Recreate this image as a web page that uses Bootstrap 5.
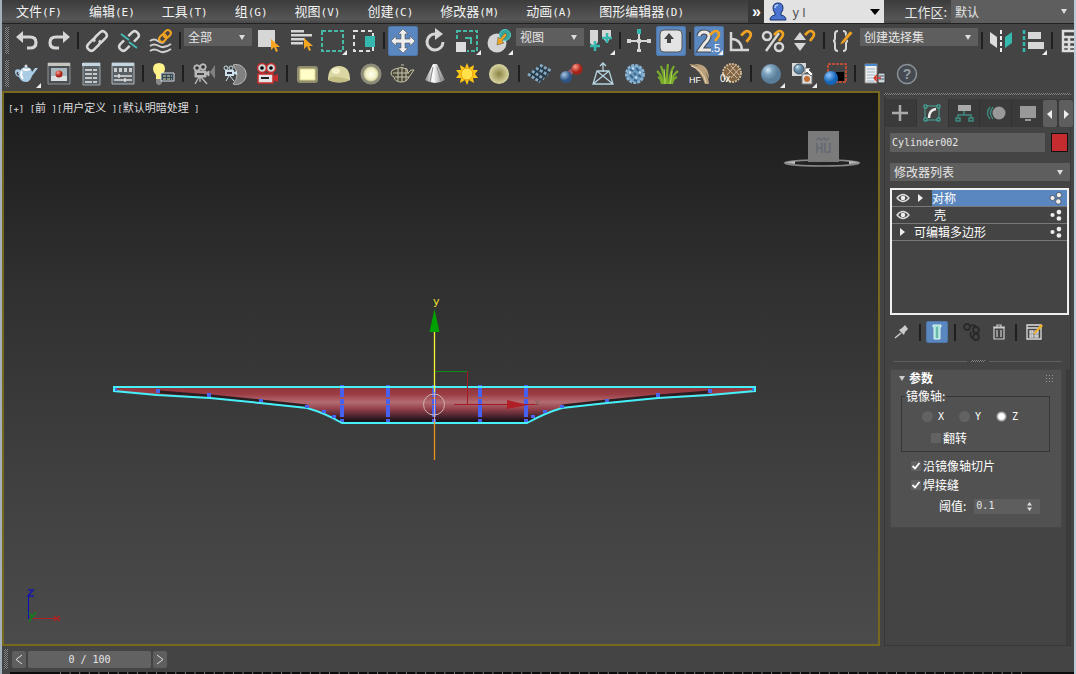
<!DOCTYPE html>
<html lang="zh-CN">
<head>
<meta charset="utf-8">
<meta name="viewport" content="width=device-width, initial-scale=1">
<title>3ds Max</title>
<link href="https://cdn.jsdelivr.net/npm/bootstrap@5.3.0/dist/css/bootstrap.min.css" rel="stylesheet">
<script src="https://cdn.jsdelivr.net/npm/bootstrap@5.3.0/dist/js/bootstrap.bundle.min.js"></script>
<style>
:root{--ui:#444;--field:#5e5e5e;--hot:#5b87c0;--ink:#e6e6e6}
body{background:var(--ui);color:var(--ink);font:12px/16px "Noto Sans CJK SC",sans-serif}
.lat{font-family:"DejaVu Sans Mono",monospace;font-size:10px}
.app{border-left:2px solid #a4b0ba;border-right:2px solid #b9cbd8}
.menubar{height:24px;background:linear-gradient(#3c3c3c,#565656 85%,#484848);border-bottom:1px solid #222;font-size:13px}
.menubar .menu-link{color:#f2f2f2;text-decoration:none;padding:0 13px 0 14px;white-space:nowrap;line-height:21px}
.menubar .lat{font-size:11px}
.more{background:#383838;color:#fff;border:0;width:16px;font:bold 16px/18px "Liberation Sans",sans-serif}
.userbox{width:120px;background:#e2e2e2}
.userbox select{color:#555;font:13px/20px "Liberation Sans",sans-serif}
.pick{appearance:none;border:0;border-radius:0;background:var(--field) url("data:image/svg+xml,%3Csvg xmlns='http://www.w3.org/2000/svg' width='8' height='5'%3E%3Cpath d='M1 0h6L4 5z' fill='%23ddd'/%3E%3C/svg%3E") no-repeat right 6px center;color:var(--ink);padding:0 16px 0 4px;height:18px;font-size:12px;line-height:16px}
.pick-dark{background:transparent url("data:image/svg+xml,%3Csvg xmlns='http://www.w3.org/2000/svg' width='10' height='6'%3E%3Cpath d='M0 0h10L5 6z' fill='%23000'/%3E%3C/svg%3E") no-repeat right 4px center}
.w-filter{width:68px}.w-sets{width:118px}.w-space{width:123px}
.toolrow{height:33px;padding-left:3px}
.grip{width:4px;height:27px;margin-right:2px;flex:none;background:repeating-conic-gradient(#858585 0 25%,#3a3a3a 0 50%) 0 0/2px 2px}
.tool{width:32px;height:30px;padding:0;border:0;background:none;flex:none;display:flex;align-items:center;justify-content:center}
.tool svg{width:28px;height:28px;flex:none}
.tool.on{background:var(--hot);width:30px;margin:0 1px;border-radius:3px;box-shadow:inset 0 0 0 1px #4d76aa}
.bar{width:2px;height:17px;background:#1f1f1f;margin:0 2px;flex:none}
.wide .bar{margin:0 3px}
.toolrow .pick{margin:4px 1px 0;align-self:flex-start;flex:none}
.stage{padding-top:1px}
.view{border:2px solid #776820;background:linear-gradient(#1b1b1b,#303030 35%,#404040 70%,#4b4b4b)}
.viewtag{top:6px;left:4px;font-size:11px;color:#dcdcdc;white-space:pre;z-index:1}
.viewtag a{color:inherit;text-decoration:none}
.viewtag .lat{font-size:9px}
.cube{top:36px;right:16px}
.tripod{left:20px;bottom:16px}
.panel{width:194px;padding:2px 3px 0 4px}
.panel-in{border:1px solid #383838;border-top:0;padding:0 0 0 5px}
.dots{height:2px;background:repeating-conic-gradient(#858585 0 25%,#3a3a3a 0 50%) 0 0/2px 2px}
.tabs{background:#3a3a3a;margin:4px -3px 0 -5px}
.tab{height:28px;flex:1 1 0;border:0;padding:0;background:none;border-right:1px solid #333}
.tab.on{background:var(--ui)}
.tab svg{width:24px;height:24px}
.arrow{width:14px;height:27px;border:0;padding:0;background:#5e5e5e;border-radius:2px;margin-right:2px;flex:none}
.arrow:last-child{margin-right:0}
.namerow{padding:6px 2px 0 0;gap:6px;margin-bottom:11px}
.namebox{background:var(--field);border:0;color:var(--ink);height:19px;padding:0 2px;min-width:0}
.swatch{width:17px;height:19px;border:1px solid #111;background:#c42c30;padding:0}
.stack{border:2px solid #f0f0f0;height:127px;margin:7px 1px 0 0}
.stack-row{height:17px;border-bottom:1px solid #787878;line-height:15px;color:#fff}
.stack-row svg{flex:none}
.stack-name{line-height:16px}
.stack-row.on .hl{background:var(--hot)}
.mini{margin-top:6px}
.mini .tool{width:24px;height:22px}
.mini .tool.on{width:22px}
.mini svg{width:20px;height:20px}
.divide{margin:17px 8px 7px 4px}
.divide .dots{width:14px}
.rule-line{height:1px;background:#606060}
.rollup{background:#515151;border:1px solid #484848;border-radius:2px;width:172px;height:159px;color:#fff;flex:none}
.track{width:5px;background:#3c3c3c}
.axisbox{border:1px solid #363636;width:149px;height:64px;margin:2px 0 0 10px}
.axisbox legend{font-size:12px;line-height:16px;width:auto;float:none;margin:0 0 3px 3px;padding:0 1px}
.opt{display:flex;align-items:center;gap:2px;min-height:0;margin:0;padding:0;line-height:19px}
.opt .form-check-input{float:none;margin:0;width:10px;height:10px;border:0;background-color:#626262;border-radius:1px;flex:none}
.opt .form-check-input:checked{background-color:#626262;background-image:url("data:image/svg+xml,%3Csvg xmlns='http://www.w3.org/2000/svg' viewBox='0 0 10 10'%3E%3Cpath d='M1.5 5l2.5 2.5L8.500 2' fill='none' stroke='%23fff' stroke-width='1.800'/%3E%3C/svg%3E")}
.opt .form-check-input[type=radio]{width:11px;height:11px;border-radius:50%}
.opt .form-check-input[type=radio]:checked{background-image:radial-gradient(#fff 35%,#bbb 50%,transparent 70%)}
.opt-axis{width:37px;gap:5px}
.flip{margin:2px 0 0 29px}
.spin{background:var(--field);width:66px;height:15px}
.spin input{background:none;border:0;color:var(--ink);width:52px;height:15px;padding:0 2px}
.foot{height:28px}
.timerow{padding:3px 0 0 2px;gap:2px}
.timerow .grip{height:20px}
.step{width:14px;height:17px;border:0;padding:0;background:var(--field);border-radius:2px;display:flex;align-items:center;justify-content:center}
.slider{width:123px;height:17px;background:#626262;border-radius:2px;line-height:17px;text-align:center;white-space:pre}
.ticks{height:2px;background:#0c0c0c}
.ticks div{height:2px;margin:0 52px 0 50px;background:linear-gradient(90deg,#777 1px,transparent 1px) 0 0/1% 100%}
</style>
</head>
<body>
<svg width="0" height="0" class="position-absolute" aria-hidden="true"><defs>
<symbol id="fly" viewBox="0 0 28 28"><path d="M28 28h-5l5-5z" fill="#eee"/></symbol>
<symbol id="magnet" viewBox="0 0 14 14"><path d="M2 6L5 3Q8 1 10 3T10 8L7 12" fill="none" stroke="#f0a322" stroke-width="2.600"/></symbol>
<symbol id="cursor" viewBox="0 0 10 14"><path d="M1 0v11l3-3 2 5 2-1-2-4h4z" fill="#f6a623"/></symbol>
<symbol id="eye" viewBox="0 0 14 10"><path d="M1 5Q7-2 13 5Q7 12 1 5z" fill="none" stroke="#ddd" stroke-width="1.300"/><circle cx="7" cy="5" r="2.300" fill="#eee"/></symbol>
<symbol id="tri" viewBox="0 0 6 8"><path d="M0 0l5 4-5 4z" fill="#eee"/></symbol>
<symbol id="nodes" viewBox="0 0 12 12"><circle cx="3" cy="6" r="1.800"/><circle cx="8.500" cy="3.500" r="2"/><circle cx="8.500" cy="9" r="2"/></symbol>
<symbol id="nodesOn" viewBox="0 0 12 12"><circle cx="3" cy="6" r="2.200"/><circle cx="8.500" cy="3.500" r="2.300"/><circle cx="8" cy="9" r="2.300"/></symbol>
<symbol id="camera" viewBox="0 0 28 28"><circle cx="8" cy="8" r="3.200"/><circle cx="14" cy="7" r="3.200"/><path d="M6 11h11v6H6zM17 13l3-2v5l-3-2z"/><path d="M10 17l-4 7M12 17l6 7M11 17v5" stroke-width="1.400" fill="none"/></symbol>
<radialGradient id="gBlue" cx=".35" cy=".3"><stop offset="0" stop-color="#d9ecf8"/><stop offset=".45" stop-color="#7fa4be"/><stop offset="1" stop-color="#5b7f9a"/></radialGradient>
<radialGradient id="gDeep" cx=".35" cy=".3"><stop offset="0" stop-color="#8cc4ff"/><stop offset="1" stop-color="#1464b8"/></radialGradient>
<radialGradient id="gSteel" cx=".35" cy=".3"><stop offset="0" stop-color="#a5c4e4"/><stop offset="1" stop-color="#2c5484"/></radialGradient>
<radialGradient id="gRed" cx=".35" cy=".3"><stop offset="0" stop-color="#ff9a88"/><stop offset="1" stop-color="#a82218"/></radialGradient>
<radialGradient id="gYel"><stop offset="0" stop-color="#fffff0"/><stop offset=".7" stop-color="#f2efc4"/><stop offset="1" stop-color="#c6c391"/></radialGradient>
<radialGradient id="gOlive"><stop offset="0" stop-color="#8b8344"/><stop offset="1" stop-color="#dcd8a4"/></radialGradient>
<linearGradient id="gCone"><stop offset="0" stop-color="#888"/><stop offset=".4" stop-color="#fff"/><stop offset="1" stop-color="#777"/></linearGradient>
<linearGradient id="gBody" gradientUnits="userSpaceOnUse" x1="0" y1="387" x2="0" y2="423"><stop offset="0" stop-color="#8d3239"/><stop offset=".2" stop-color="#9c3d44"/><stop offset=".42" stop-color="#b36d73"/><stop offset=".6" stop-color="#96424c"/><stop offset=".82" stop-color="#47222e"/><stop offset=".93" stop-color="#1c1418"/></linearGradient>
</defs></svg>

<div class="app d-flex flex-column min-vh-100">
<header class="menubar d-flex align-items-stretch">
  <nav class="d-flex flex-grow-1 overflow-hidden" aria-label="主菜单">
    <a href="#" class="menu-link">文件<span class="lat">(F)</span></a><a href="#" class="menu-link">编辑<span class="lat">(E)</span></a><a href="#" class="menu-link">工具<span class="lat">(T)</span></a><a href="#" class="menu-link">组<span class="lat">(G)</span></a><a href="#" class="menu-link">视图<span class="lat">(V)</span></a><a href="#" class="menu-link">创建<span class="lat">(C)</span></a><a href="#" class="menu-link">修改器<span class="lat">(M)</span></a><a href="#" class="menu-link">动画<span class="lat">(A)</span></a><a href="#" class="menu-link">图形编辑器<span class="lat">(D)</span></a>
  </nav>
  <button class="more p-0">»</button>
  <div class="userbox d-flex align-items-center ps-1">
    <svg width="20" height="20" viewBox="0 0 20 20"><path d="M2 18q0-4 5-5v-2q-2-2-2-5 0-5 5-5t5 5q0 3-2 5v2q5 1 5 5z" fill="#4b74d0" stroke="#16306e"/><path d="M7 6q0-3 3-3" stroke="#a9c6ff" stroke-width="1.500" fill="none"/></svg>
    <select class="pick pick-dark flex-grow-1" aria-label="用户"><option>y l</option></select>
  </div>
  <label for="ws" class="ps-3 ms-1 pe-1 align-self-center">工作区:</label>
  <select id="ws" class="pick align-self-center h-100 w-space"><option>默认</option></select>
</header>

<div class="toolrow d-flex align-items-center overflow-hidden" role="toolbar" aria-label="主工具栏">
  <div class="grip"></div>
  <button class="tool" aria-label="撤消"><svg viewBox="0 0 28 28"><path d="M3 10l7-6v12z" fill="#d6d6d6"/><path d="M9 10h8q6 0 6 5.500T17 21h-3" fill="none" stroke="#d6d6d6" stroke-width="3.200"/></svg></button>
  <button class="tool" aria-label="重做"><svg viewBox="0 0 28 28"><path d="M25 10l-7-6v12z" fill="#d6d6d6"/><path d="M19 10h-8q-6 0-6 5.500T11 21h3" fill="none" stroke="#d6d6d6" stroke-width="3.200"/></svg></button>
  <span class="bar"></span>
  <button class="tool" aria-label="链接"><svg viewBox="0 0 28 28"><g transform="rotate(-45 14 14)" fill="none" stroke="#d8d8d8" stroke-width="2.500"><path d="M13 10H6q-4 0-4 4t4 4h6q4 0 4-3"/><path d="M15 18h7q4 0 4-4t-4-4h-6q-4 0-4 3"/></g></svg></button>
  <button class="tool" aria-label="取消链接"><svg viewBox="0 0 28 28"><g transform="rotate(-45 14 14)" fill="none" stroke="#d8d8d8" stroke-width="2.500"><path d="M11 10H6q-4 0-4 4t4 4h5M17 18h5q4 0 4-4t-4-4h-5"/></g><path d="M6 7l8 6M14 15l8 6" stroke="#45b8b0" stroke-width="2"/></svg></button>
  <button class="tool" aria-label="绑定到空间扭曲"><svg viewBox="0 0 28 28"><g fill="none" stroke="#d0d0d0" stroke-width="2"><path d="M3 14q4-3 8 0t6 1M3 19q4-3 9 0t12-2M3 24q4-3 9 0t12-2"/></g><g transform="rotate(-45 18 9)" fill="none" stroke="#f0a322" stroke-width="2"><rect x="11" y="6" width="8" height="6" rx="3"/><rect x="17" y="6" width="8" height="6" rx="3"/></g></svg></button>
  <span class="bar"></span>
  <select class="pick w-filter" aria-label="选择过滤器"><option>全部</option></select>
  <button class="tool" aria-label="选择对象"><svg viewBox="0 0 28 28"><path d="M3 3h17v17H3z" fill="#d6d6d6"/><use href="#cursor" x="15" y="12" width="10" height="14"/></svg></button>
  <button class="tool" aria-label="按名称选择"><svg viewBox="0 0 28 28"><path d="M4 3h13v2.500H4zM4 7h21v2.500H4zM4 11h14v2.500H4zM4 15h12v2.500H4z" fill="#d6d6d6"/><use href="#cursor" x="16" y="11" width="10" height="14"/></svg></button>
  <button class="tool" aria-label="矩形选择区域"><svg viewBox="0 0 28 28"><path d="M3 4h21v20H3z" fill="none" stroke="#45b8a6" stroke-width="2" stroke-dasharray="4 2"/><use href="#fly"/></svg></button>
  <button class="tool" aria-label="窗口/交叉"><svg viewBox="0 0 28 28"><path d="M3 4h19v20H3z" fill="none" stroke="#e0e0e0" stroke-width="2" stroke-dasharray="4 3"/><path d="M14 9h10v11H14z" fill="#35b8ae"/></svg></button>
  <span class="bar"></span>
  <button class="tool on" aria-label="移动"><svg viewBox="0 0 28 28"><path d="M14 2l5 5h-3v5h5V9l5 5-5 5v-3h-5v5h3l-5 5-5-5h3v-5H7v3l-5-5 5-5v3h5V7H9z" fill="#eee" stroke="#555" stroke-width=".6"/></svg></button>
  <button class="tool" aria-label="旋转"><svg viewBox="0 0 28 28"><path d="M15 7a8 8 0 1 0 7 8" fill="none" stroke="#d6d6d6" stroke-width="3"/><path d="M14 1l8 6-8 6z" fill="#d6d6d6"/></svg></button>
  <button class="tool" aria-label="缩放"><svg viewBox="0 0 28 28"><path d="M4 4h20v20H4z" fill="none" stroke="#45b8a6" stroke-width="2" stroke-dasharray="4 2"/><path d="M2 14h12v12H2z" fill="#444"/><path d="M3 15h10v10H3z" fill="#ddd"/><path d="M12 11h6v6" fill="none" stroke="#45b8a6" stroke-width="2"/><use href="#fly"/></svg></button>
  <button class="tool" aria-label="放置"><svg viewBox="0 0 28 28"><circle cx="12" cy="16" r="9.500" fill="#d4d4d4"/><circle cx="20" cy="8" r="5.500" fill="#35a39a" stroke="#55cfc6"/><path d="M20 6l-5 6-2-2-1 8 7-2-2-2 5-6z" fill="#f0a322" stroke="#555" stroke-width=".5"/><use href="#fly"/></svg></button>
  <select class="pick w-filter" aria-label="参考坐标系"><option>视图</option></select>
  <button class="tool" aria-label="使用轴点中心"><svg viewBox="0 0 28 28"><path d="M3 3h8v12l-4 5-4-4zM15 3h9v7l-4 6-5-6z" fill="#d6d6d6"/><path d="M8 14v10M3 19h10M20 6v10M15 11h10" stroke="#35b8ae" stroke-width="2.500"/><use href="#fly"/></svg></button>
  <span class="bar"></span>
  <button class="tool" aria-label="选择并操纵"><svg viewBox="0 0 28 28"><path d="M14 7v17M4 14h20" stroke="#d6d6d6" stroke-width="2"/><path d="M12 2h4v5h-4z" fill="#35b8ae"/><path d="M2 12h4v4H2zM22 12h4v4h-4zM12 12h4v4h-4zM12 22h4v3h-4z" fill="#d6d6d6"/></svg></button>
  <button class="tool on" aria-label="键盘快捷键覆盖"><svg viewBox="0 0 28 28"><rect x="3" y="3" width="22" height="22" rx="4" fill="#e4e4e4" stroke="#555"/><path d="M12 6l5 6h-3v4h-4v-4H7z" fill="#444"/></svg></button>
  <span class="bar"></span>
  <button class="tool on" aria-label="捕捉开关"><svg viewBox="0 0 28 28"><path d="M4 9q1-4 5-4 5 0 5 4 0 3-4 7l-5 7h11" fill="none" stroke="#444" stroke-width="5"/><path d="M4 9q1-4 5-4 5 0 5 4 0 3-4 7l-5 7h11" fill="none" stroke="#e8e8e8" stroke-width="3"/><use href="#magnet" x="13" y="2" width="14" height="14"/><text x="16" y="25" font-family="Liberation Sans" font-size="11" fill="#fff">.5</text><use href="#fly"/></svg></button>
  <button class="tool" aria-label="角度捕捉"><svg viewBox="0 0 28 28"><path d="M4 5v18h18M4 12q10 0 11 11" fill="none" stroke="#d6d6d6" stroke-width="2.500"/><use href="#magnet" x="12" y="2" width="15" height="15"/></svg></button>
  <button class="tool" aria-label="百分比捕捉"><svg viewBox="0 0 28 28"><g fill="none" stroke="#d6d6d6" stroke-width="2.500"><circle cx="8" cy="9" r="4"/><circle cx="20" cy="20" r="4"/><path d="M20 6L7 24"/></g><use href="#magnet" x="13" y="2" width="14" height="14"/></svg></button>
  <button class="tool" aria-label="微调器捕捉"><svg viewBox="0 0 28 28"><path d="M3 13l6-8 6 8zM3 16h12l-6 8z" fill="#d6d6d6"/><use href="#magnet" x="12" y="2" width="14" height="14"/></svg></button>
  <span class="bar"></span>
  <button class="tool" aria-label="编辑命名选择集"><svg viewBox="0 0 28 28"><path d="M9 4q-3 0-3 3v4q0 3-2 3 2 0 2 3v4q0 3 3 3M14 4q3 0 3 3v4q0 3 2 3-2 0-2 3v4q0 3-3 3" fill="none" stroke="#d6d6d6" stroke-width="2"/><path d="M12 15l9-11 3 2-9 10-4 2z" fill="#f0a322" stroke="#444" stroke-width=".6"/></svg></button>
  <select class="pick w-sets" aria-label="命名选择集"><option>创建选择集</option></select>
  <span class="bar"></span>
  <button class="tool" aria-label="镜像"><svg viewBox="0 0 28 28"><path d="M3 5l7 5v11l-7-5z" fill="#ddd"/><path d="M25 5l-7 5v11l7-5z" fill="#35b8ae"/><path d="M14 3v22" stroke="#eee" stroke-width="2" stroke-dasharray="4 2"/></svg></button>
  <button class="tool" aria-label="对齐"><svg viewBox="0 0 28 28"><path d="M5 3v22" stroke="#35b8ae" stroke-width="2.500" stroke-dasharray="4 2"/><path d="M9 5h13v7H9zM9 15h16v7H9z" fill="#d6d6d6"/><use href="#fly"/></svg></button>
  <span class="bar"></span>
  <button class="tool justify-content-start ps-1" aria-label="层资源管理器"><svg viewBox="0 0 28 28"><path d="M4 4h20v20H4zM4 10h20M4 15h20M4 20h20M10 10v14M17 10v14" fill="none" stroke="#ddd" stroke-width="2.500"/></svg></button>
</div>

<div class="toolrow wide d-flex align-items-center overflow-hidden" role="toolbar" aria-label="渲染工具栏">
  <div class="grip"></div>
  <button class="tool" aria-label="渲染"><svg viewBox="0 0 28 28"><path d="M8 9q5-4 10 0l1 3 3-4h3l-6 8q-2 6-6 6-5 0-7-5-4-1-4-5t6-2z" fill="#aacbe4"/><path d="M9 11q-2 4 1 8M10 9q3 2 7 0" stroke="#fff" fill="none" stroke-width="2"/><path d="M5 12q-2 2 1 3" stroke="#444" fill="none" stroke-width="1.500"/><circle cx="13" cy="6" r="1.500" fill="#ddd"/><use href="#fly"/></svg></button>
  <button class="tool" aria-label="渲染帧窗口"><svg viewBox="0 0 28 28"><path d="M3 3h22v21H3z" fill="#4a5055" stroke="#909090"/><path d="M3 3h22v3H3z" fill="#c4c4bc"/><path d="M6 8h16v13H6z" fill="#aab8be"/><path d="M6 16h16v5H6z" fill="#dadfe0"/><circle cx="14" cy="14" r="3.500" fill="url(#gRed)"/></svg></button>
  <button class="tool" aria-label="渲染设置"><svg viewBox="0 0 28 28"><path d="M6 3h17v22H6z" fill="#596066" stroke="#9ba4aa"/><path d="M5 3h18v3H5z" fill="#c4d5e0"/><path d="M8 10h12M8 14h12M8 18h12M8 22h12" stroke="#c5c8c8" stroke-width="2" stroke-dasharray="7 1 4 1"/></svg></button>
  <button class="tool" aria-label="材质列表"><svg viewBox="0 0 28 28"><path d="M3 3h22v21H3z" fill="#596066" stroke="#b0b8bc"/><path d="M3 3h22v3H3z" fill="#c4d5e0"/><path d="M5 10h18" stroke="#ccc" stroke-width="4" stroke-dasharray="3 2"/><path d="M5 16h18M5 20h18M10 14v4M16 18v4" stroke="#ddd" stroke-width="1.500"/></svg></button>
  <span class="bar"></span>
  <button class="tool" aria-label="灯光列表"><svg viewBox="0 0 28 28"><path d="M10 3q6 0 6 6 0 3-3 6v4H7v-4q-3-3-3-6 0-6 6-6z" fill="#fff38a"/><path d="M7 19h6v4l-2 2H9l-2-2z" fill="#888"/><path d="M12 13h13v8H12z" fill="#30445a" stroke="#ddd"/><path d="M14 16h9M14 19h9" stroke="#ece7a0" stroke-dasharray="3 1"/></svg></button>
  <span class="bar"></span>
  <button class="tool" aria-label="目标摄影机"><svg viewBox="0 0 28 28"><use href="#camera" fill="#b9b9b9" stroke="#b9b9b9"/><circle cx="8" cy="8" r="1.800" fill="#333"/><circle cx="14" cy="7" r="1.800" fill="#333"/><path d="M8 14h7" stroke="#444" stroke-width="2"/><path d="M26 5v14l-5-7z" fill="#808080"/></svg></button>
  <button class="tool" aria-label="VR 摄影机"><svg viewBox="0 0 28 28"><path d="M12 5a10 10 0 1 1 0 19q8-9 0-19z" fill="#808080" stroke="#b8b8b8"/><path d="M4 10h9v6H4zM13 12l3-1v4l-3-1z" fill="#cde2ea"/><circle cx="5" cy="8" r="2" fill="none" stroke="#cde2ea"/><circle cx="10" cy="8" r="2" fill="none" stroke="#cde2ea"/><path d="M8 16l-3 5M9 16l4 5" stroke="#cde2ea"/><path d="M6 13h5" stroke="#334" stroke-width="2"/></svg></button>
  <button class="tool" aria-label="物理摄影机"><svg viewBox="0 0 28 28"><circle cx="9" cy="8" r="4.500" fill="#ccd5d5" stroke="#c92c2c" stroke-width="1.500"/><circle cx="18" cy="8" r="4.500" fill="#ccd5d5" stroke="#c92c2c" stroke-width="1.500"/><path d="M5 14h15v9H5z" fill="#e3e3e3" stroke="#c92c2c" stroke-width="1.500"/><path d="M20 16l5-2v8l-5-2z" fill="#c92c2c"/><circle cx="9" cy="8" r="1.800"/><circle cx="18" cy="8" r="1.800"/><path d="M8 18h8" stroke="#222" stroke-width="2"/></svg></button>
  <span class="bar"></span>
  <button class="tool" aria-label="平面灯"><svg viewBox="0 0 28 28"><rect x="4" y="6" width="21" height="17" rx="3" fill="#918e70"/><path d="M7 9h15v11H7z" fill="#fffdc8" stroke="#ded88e"/></svg></button>
  <button class="tool" aria-label="穹顶灯"><svg viewBox="0 0 28 28"><path d="M3 20Q3 6 14 6t11 14q-11 5-22 0z" fill="#dbd7a2"/><path d="M3 20Q5 15 14 17t11 3q-11 5-22 0z" fill="#c2be84"/><ellipse cx="11" cy="11" rx="4" ry="3" fill="#f4f1ca"/></svg></button>
  <button class="tool" aria-label="球形灯"><svg viewBox="0 0 28 28"><circle cx="14" cy="14" r="10.500" fill="#8d8b7a"/><circle cx="14" cy="14" r="7.500" fill="url(#gYel)"/></svg></button>
  <button class="tool" aria-label="网格灯"><svg viewBox="0 0 28 28"><path d="M6 9q6-3 12 0l1 4 3-3h3l-5 7q-2 5-8 5t-7-5q-3-1-3-4t4-4z" fill="#4a493c" stroke="#c9c5aa"/><path d="M4 13h16M6 17h14M9 8v13M13 7v15M17 8v13M12 5h3" stroke="#c9c5aa"/></svg></button>
  <button class="tool" aria-label="IES 灯"><svg viewBox="0 0 28 28"><path d="M12 4h4l8 16q-10 6-20 0z" fill="url(#gCone)"/><path d="M12 7l-3 15M16 7l4 14" stroke="#888"/></svg></button>
  <button class="tool" aria-label="太阳"><svg viewBox="0 0 28 28"><path d="M14 3l2 5 5-3-1 5 5 0-3 4 3 4h-5l1 5-5-3-2 5-2-5-5 3 1-5H3l3-4-3-4h5L7 5l5 3z" fill="#ffc814"/><circle cx="14" cy="14" r="6" fill="#ffe14a" stroke="#e59a10"/></svg></button>
  <button class="tool" aria-label="环境灯"><svg viewBox="0 0 28 28"><circle cx="14" cy="14" r="10" fill="url(#gOlive)"/></svg></button>
  <span class="bar"></span>
  <button class="tool" aria-label="实例"><svg viewBox="0 0 28 28"><path d="M3 14l12-9 11 6-12 12z" fill="#263a49"/><g fill="none" stroke="#86a9bf" stroke-width="2.800" stroke-dasharray="3 1.500"><path d="M3 14l12 8M7 11l12 8M11 8l12 7M15 5l11 6"/></g></svg></button>
  <button class="tool" aria-label="变形球"><svg viewBox="0 0 28 28"><path d="M10 15l9-7" stroke="#9a5a6c" stroke-width="5"/><circle cx="9" cy="17" r="6" fill="url(#gSteel)"/><circle cx="20" cy="9" r="5.500" fill="url(#gRed)"/></svg></button>
  <button class="tool" aria-label="代理"><svg viewBox="0 0 28 28"><path d="M8 11h12l4 13H4zM8 11l16 13M20 11L4 24M14 12V3M11 6l3-3 3 3" fill="none" stroke="#b5d3de" stroke-width="1.300"/></svg></button>
  <button class="tool" aria-label="置换"><svg viewBox="0 0 28 28"><circle cx="14" cy="14" r="8.500" fill="#6f9bc0" stroke="#87b3d3" stroke-width="3" stroke-dasharray="3 1"/><path d="M9 9l3 2M15 8l3 3M9 15l3 3M17 15l3 2M13 13l2 2M13 20l3 1" stroke="#38658b" stroke-width="2"/><path d="M11 8l2 1M8 12l2 1M14 17l2 1M18 12l2 1" stroke="#c5dff2" stroke-width="2"/></svg></button>
  <button class="tool" aria-label="毛发"><svg viewBox="0 0 28 28"><path d="M11 24Q8 14 4 11M13 24Q10 12 8 6M14 24Q14 10 15 4M16 24Q17 12 21 6M18 24Q19 15 25 11M9 24Q8 18 5 17M19 24q1-6 5-7" fill="none" stroke="#79ac2b" stroke-width="2.200"/><path d="M12 24Q12 14 11 9M17 24Q19 16 19 11" stroke="#b5dc60" fill="none"/></svg></button>
  <button class="tool" aria-label="头发农场"><svg viewBox="0 0 28 28"><path d="M4 4q18 1 20 20h-4Q16 11 4 4zM9 4q15-1 15 15-4-11-15-15z" fill="#bba17c"/><path d="M6 6q12 3 15 17" stroke="#ead7b7" fill="none"/><text x="4" y="23" font-family="Liberation Sans" font-size="9" fill="#fff">HF</text></svg></button>
  <button class="tool" aria-label="Ox 毛发"><svg viewBox="0 0 28 28"><circle cx="15" cy="13" r="9" fill="#826447" stroke="#cdb794" stroke-width="2" stroke-dasharray="2 1"/><path d="M10 8l10 10M14 6l8 9M18 6l-8 9M22 9l-8 9" stroke="#d4bf9c"/><text x="3" y="22" font-family="Liberation Sans" font-size="10" fill="#fff">0x</text></svg></button>
  <span class="bar"></span>
  <button class="tool" aria-label="材质编辑器"><svg viewBox="0 0 28 28"><circle cx="14" cy="14" r="10" fill="url(#gBlue)"/><use href="#fly"/></svg></button>
  <button class="tool" aria-label="材质转换"><svg viewBox="0 0 28 28"><path d="M3 3h14v13H3z" fill="#d8d8d8"/><circle cx="10" cy="9" r="5" fill="url(#gBlue)" stroke="#456"/><path d="M13 14h10v10H13z" fill="#e0e0e0" stroke="#777"/><circle cx="18" cy="19" r="3" fill="#c46f35"/><path d="M16 8h6l-2 2 4 4-2 2-4-4-2 2z" fill="#fff" stroke="#333" stroke-width=".6"/><use href="#fly"/></svg></button>
  <button class="tool" aria-label="渲染区域"><svg viewBox="0 0 28 28"><path d="M7 4h18v18H7z" fill="none" stroke="#e05035" stroke-width="1.500" stroke-dasharray="3 1"/><path d="M15 12h8v9h-8z" fill="#000"/><circle cx="10" cy="18" r="7" fill="url(#gDeep)"/></svg></button>
  <span class="bar"></span>
  <button class="tool" aria-label="场景转换"><svg viewBox="0 0 28 28"><path d="M4 4h12v19H4z" fill="#eee" stroke="#888"/><path d="M4 4h12v2H4z" fill="#4888ce"/><path d="M6 9h8M6 12h8M6 15h8M6 18h8M6 21h8" stroke="#9bb3c5"/><path d="M17 13h7v10h-7z" fill="#ccd5da" stroke="#333"/><path d="M18 16h5M18 19h5" stroke="#456"/><path d="M20 18h-7m0 0l3-3m-3 3l3 3" stroke="#d43526" stroke-width="1.500"/></svg></button>
  <button class="tool" aria-label="帮助"><svg viewBox="0 0 28 28"><circle cx="14" cy="14" r="9.500" fill="#454a50" stroke="#8b9299" stroke-width="1.500"/><text x="14" y="19" text-anchor="middle" font-family="Liberation Sans" font-size="14" font-weight="bold" fill="#969da4">?</text></svg></button>
</div>

<main class="stage d-flex flex-grow-1">
  <section class="view position-relative flex-grow-1" aria-label="前视图">
    <div class="viewtag position-absolute"><a href="#"><span class="lat">[+] </span></a><a href="#"><span class="lat">[</span>前<span class="lat"> ]</span></a><a href="#"><span class="lat">[</span>用户定义<span class="lat"> ]</span></a><a href="#"><span class="lat">[</span>默认明暗处理<span class="lat"> ]</span></a></div>
    <svg class="position-absolute top-0 start-0 w-100 h-100" viewBox="4 93 874 551" preserveAspectRatio="xMidYMid meet">
      <path d="M114 387H755V391L710 395 658 398 607 403 562 408 527 423H342L307 408 260 403 210 398 157 395 114 391z" fill="url(#gBody)"/>
      <path d="M160 392l51 4 50 5 46 5M709 392l-51 4-51 5-45 5" stroke="#2a1e21" stroke-width="3" fill="none"/>
      <path d="M342 385v38M388 385v38M434 385v38M480 385v38M526 385v38" stroke="#4760f0" stroke-width="4" stroke-dasharray="12 2 5 1"/>
      <path d="M114 387H755V391L710 395 658 398 607 403 562 408Q545 413 527 423H342Q325 413 307 408L260 403 210 398 157 395 114 391z" fill="none" stroke="#45f0f8" stroke-width="2"/>
      <g fill="#4764ee"><path d="M156 389h4v4h-4zM207 393h4v4h-4zM259 399h4v3h-4zM305 405h4v3h-4zM322 410h4v3h-4zM332 415h4v3h-4zM531 415h4v3h-4zM543 410h4v3h-4zM560 405h4v3h-4zM605 399h4v3h-4zM656 393h4v4h-4zM708 389h4v4h-4zM752 388h2v3h-2zM115 388h2v3h-2z"/></g>
      <path d="M434 371.500h33" stroke="#0a8c10"/><path d="M467.500 371v33M454 404.500h84" stroke="#a31c24"/><path d="M507 400l21 5-21 4z" fill="#b01f26"/>
      <path d="M434.500 330v62" stroke="#f5f530" stroke-width="1.300"/><path d="M434.500 392v30" stroke="#d8a8a4"/><path d="M434.500 422v38" stroke="#e8941c" stroke-width="1.300"/>
      <path d="M434.500 309l5 23h-10z" fill="#00a000"/>
      <circle cx="434" cy="404.500" r="10.500" fill="none" stroke="#cfb4b4"/>
      <text x="433" y="305" font-family="DejaVu Sans" font-size="11" fill="#e8e030">y</text>
      <text x="534" y="406" font-family="DejaVu Sans" font-size="11" fill="#8d6064">x</text>
    </svg>
    <svg class="cube position-absolute" width="80" height="40" viewBox="0 0 80 40"><ellipse cx="40" cy="34" rx="37" ry="3" fill="none" stroke="#8a8a8a" stroke-width="1.500"/><path d="M1 34l12-2v3zM79 34l-12-2v3z" fill="#bbb"/><path d="M26 2h31v31H26z" fill="#7b7b7b"/><path d="M35 14v10M40 14v10M35 19h5M43 14v9h5v-9M34 11l3-2 2 2 3-2 2 2 3-2" fill="none" stroke="#636a74" stroke-width="1.500"/></svg>
    <svg class="tripod position-absolute" width="40" height="44" viewBox="0 0 40 44"><path d="M4.500 10v25" stroke="#1010b8"/><path d="M9 34.500h24" stroke="#b52020"/><path d="M5 29l3 4 4-5M8 33l-3 5" fill="none" stroke="#0a8a10" stroke-width="1.300"/><path d="M4 6h5l-5 6h6" fill="none" stroke="#1818a8" stroke-width="1.500"/><path d="M30 32l6 5M36 32l-6 5" stroke="#b52020" stroke-width="1.500"/></svg>
  </section>

  <aside class="panel d-flex flex-column flex-shrink-0">
    <div class="dots"></div>
    <div class="panel-in flex-grow-1 d-flex flex-column">
      <div class="tabs d-flex align-items-center" role="tablist">
        <button class="tab" role="tab" aria-label="创建"><svg viewBox="0 0 24 24"><path d="M12 4v16M4 12h16" stroke="#aaa" stroke-width="2.500"/></svg></button>
        <button class="tab on" role="tab" aria-label="修改"><svg viewBox="0 0 24 24"><path d="M5 5h14v14H5z" fill="none" stroke="#45a899"/><path d="M9 17Q9 9 16 8" fill="none" stroke="#eee" stroke-width="2.500"/><path d="M4 4h3v3H4zM17 4h3v3h-3zM4 17h3v3H4zM17 17h3v3h-3z" fill="#444" stroke="#45b8a6"/></svg></button>
        <button class="tab" role="tab" aria-label="层次"><svg viewBox="0 0 24 24"><path d="M6 4h13v6H6z" fill="#aaa"/><path d="M12 10v4M6 17v-3h13v3" stroke="#3d8c80" fill="none" stroke-width="1.500"/><path d="M4 17h4v3H4zM17 17h4v3h-4z" fill="none" stroke="#3d8c80" stroke-width="1.500"/></svg></button>
        <button class="tab" role="tab" aria-label="运动"><svg viewBox="0 0 24 24"><circle cx="15" cy="12" r="6.500" fill="#999"/><path d="M9 6q-5 6 0 12M6 6q-5 6 0 12" fill="none" stroke="#3d8c80" stroke-width="1.300"/></svg></button>
        <button class="tab border-0" role="tab" aria-label="显示"><svg viewBox="0 0 24 24"><path d="M4 5h16v12H4zM9 18h6v2H9z" fill="#999"/></svg></button>
        <button class="arrow" aria-label="向左"><svg width="6" height="9" viewBox="0 0 6 9"><path d="M5 0v9L0 4z" fill="#eee"/></svg></button>
        <button class="arrow" aria-label="向右"><svg width="6" height="9" viewBox="0 0 6 9"><path d="M1 0v9l5-5z" fill="#eee"/></svg></button>
      </div>
      <div class="namerow d-flex"><input class="namebox lat flex-grow-1" value="Cylinder002" aria-label="对象名称"><button class="swatch" aria-label="对象颜色"></button></div>
      <select class="pick" aria-label="修改器列表"><option>修改器列表</option></select>
      <div class="stack">
        <div class="stack-row on d-flex align-items-center"><svg class="ms-1" width="14" height="10"><use href="#eye"/></svg><svg class="ms-2" width="6" height="8"><use href="#tri"/></svg><span class="hl d-flex align-items-center flex-grow-1 h-100 ms-2"><span class="flex-grow-1 stack-name">对称</span><svg class="me-1" width="14" height="14" fill="#eee" stroke="#222" stroke-width=".5"><use href="#nodesOn"/></svg></span></div>
        <div class="stack-row d-flex align-items-center"><svg class="ms-1" width="14" height="10"><use href="#eye"/></svg><span class="ms-4 flex-grow-1 stack-name">壳</span><svg class="me-1" width="14" height="14" fill="#eee"><use href="#nodes"/></svg></div>
        <div class="stack-row d-flex align-items-center"><svg class="ms-2" width="6" height="8"><use href="#tri"/></svg><span class="ms-2 flex-grow-1 stack-name">可编辑多边形</span><svg class="me-1" width="14" height="14" fill="#eee"><use href="#nodes"/></svg></div>
      </div>
      <div class="mini d-flex align-items-center justify-content-between pe-4">
        <button class="tool" aria-label="锁定堆栈"><svg viewBox="0 0 20 20"><path d="M3 16l6-5" stroke="#ccc" stroke-width="1.500"/><path d="M7 8l5 5 1-3 3-3-3-4-3 3z" fill="#ccc"/></svg></button><span class="bar"></span>
        <button class="tool on" aria-label="显示最终结果"><svg viewBox="0 0 20 20"><path d="M6 3h8v2h-1v12H7V5H6z" fill="#9fe0d8" stroke="#d9f2ee"/><path d="M10 5v11" stroke="#398a80"/></svg></button><span class="bar"></span>
        <button class="tool" aria-label="使唯一"><svg viewBox="0 0 20 20"><g fill="none" stroke="#292929" stroke-width="1.800"><circle cx="5" cy="5" r="3"/><circle cx="14" cy="8" r="3"/><circle cx="14" cy="15" r="3"/><path d="M8 4q5-2 6 1M9 10q-2 5 2 6"/></g></svg></button>
        <button class="tool" aria-label="移除"><svg viewBox="0 0 20 20"><path d="M5 6h10v11H5zM4 5h12M8 5V3h4v2M8 8v7M12 8v7" fill="none" stroke="#ccc" stroke-width="1.200"/></svg></button><span class="bar"></span>
        <button class="tool" aria-label="配置修改器集"><svg viewBox="0 0 20 20"><path d="M3 3h14v14H3zM3 6h14M6 9h3v2H6zM11 9h3v2h-3zM6 13h3v2H6zM11 13h3v2h-3z" fill="none" stroke="#ddd" stroke-width="1.300"/><path d="M9 12l8-10 2 2-8 8z" fill="#f0b02a"/></svg></button>
      </div>
      <div class="divide d-flex align-items-center gap-1"><div class="rule-line flex-grow-1"></div><div class="dots"></div><div class="rule-line flex-grow-1"></div></div>
      <div class="d-flex flex-grow-1">
        <section class="rollup">
          <div class="d-flex align-items-center px-2"><svg width="6" height="5" viewBox="0 0 6 5"><path d="M0 0h6L3 5z" fill="#ccc"/></svg><strong class="ps-1 flex-grow-1">参数</strong><svg width="7" height="7" viewBox="0 0 7 7"><path d="M0 .5h7M0 3.500h7M0 6.500h7" stroke="#999" stroke-dasharray="1 2"/></svg></div>
          <fieldset class="axisbox"><legend>镜像轴:</legend>
            <div class="d-flex lat ps-3 ms-1">
              <label class="opt opt-axis"><input class="form-check-input" type="radio" name="axis">X</label><label class="opt opt-axis"><input class="form-check-input" type="radio" name="axis">Y</label><label class="opt opt-axis"><input class="form-check-input" type="radio" name="axis" checked>Z</label>
            </div>
            <label class="opt flip"><input class="form-check-input" type="checkbox">翻转</label>
          </fieldset>
          <div class="ps-3 ms-1 pt-1">
            <label class="opt"><input class="form-check-input" type="checkbox" checked>沿镜像轴切片</label>
            <label class="opt"><input class="form-check-input" type="checkbox" checked>焊接缝</label>
            <div class="d-flex align-items-center ps-4 ms-1 mt-1"><label for="thr">阈值:</label><div class="spin d-flex align-items-center ms-2"><input id="thr" class="lat" value="0.1"><svg width="7" height="9" viewBox="0 0 7 9"><path d="M1 3.500L3.500 0 6 3.500zM1 5.500h5L3.500 9z" fill="#ddd"/></svg></div></div>
          </div>
        </section>
        <div class="track ms-1"></div>
      </div>
    </div>
  </aside>
</main>

<footer class="foot d-flex flex-column justify-content-between flex-shrink-0">
  <div class="timerow d-flex align-items-center"><div class="grip"></div><button class="step" aria-label="上一帧"><svg width="8" height="11" viewBox="0 0 8 11"><path d="M7 1L1 5.500 7 10" fill="none" stroke="#ddd"/></svg></button><div class="slider lat">0 / 100</div><button class="step" aria-label="下一帧"><svg width="8" height="11" viewBox="0 0 8 11"><path d="M1 1l6 4.500L1 10" fill="none" stroke="#ddd"/></svg></button></div>
  <div class="ticks ms-2"><div></div></div>
</footer>
</div>
</body>
</html>
